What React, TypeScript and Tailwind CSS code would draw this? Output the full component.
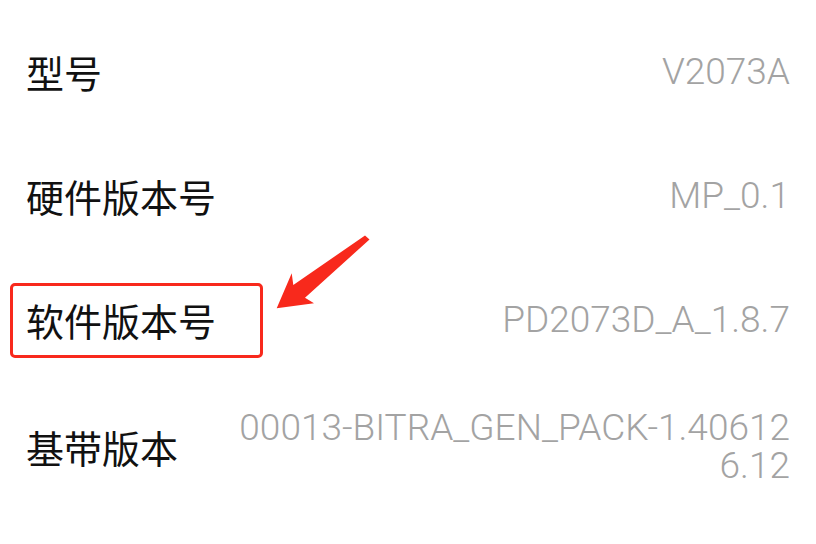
// device info rows with red annotation
const rows = [
  { label: "型号", value: "V2073A" },
  { label: "硬件版本号", value: "MP_0.1" },
  { label: "软件版本号", value: "PD2073D_A_1.8.7", marked: true },
  { label: "基带版本", value: "00013-BITRA_GEN_PACK-1.406126.12" },
];

const cjk = { fontFamily: '"Noto Sans CJK SC", "Noto Sans", sans-serif' };
const latin = { fontFamily: 'Roboto, "Noto Sans", sans-serif' };

export default function App() {
  return (
    <div className="relative w-[816px] h-[544px] overflow-hidden bg-white pt-[10px]">
      {rows.map((r) => (
        <div key={r.label} className="flex min-h-[124px] items-center justify-between gap-6 py-[27px] pl-[26px] pr-[26px]">
          <span className="relative shrink-0 text-[38px] leading-[38px] text-[#111111]" style={cjk}>
            {r.label}
            {r.marked && (
              <span className="absolute -left-[16px] -top-[18px] -right-[47px] -bottom-[19px] rounded-[5px] border-[3px] border-[#f8291c]" />
            )}
          </span>
          <span className="max-w-[566px] break-all text-right text-[37px] font-light leading-[38px] text-[#a3a3a3]" style={latin}>
            {r.value}
          </span>
        </div>
      ))}

      <svg className="absolute left-[270px] top-[230px] h-[85px] w-[105px]" viewBox="270 230 105 85">
        <polygon
          fill="#f8291c"
          points="365,235.5 369.5,239.5 305,297.7 314,303.3 276.7,308.3 291.7,273.3 293.3,285"
        />
      </svg>
    </div>
  );
}
